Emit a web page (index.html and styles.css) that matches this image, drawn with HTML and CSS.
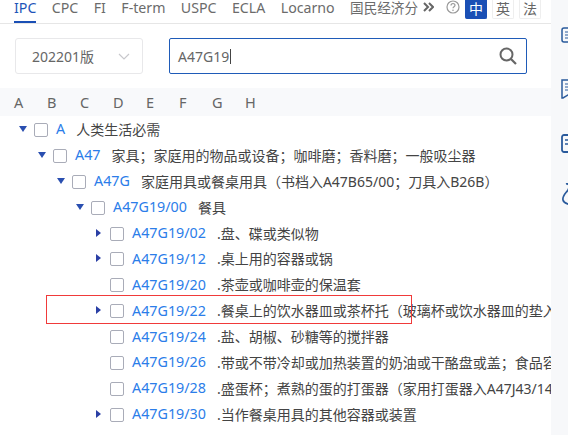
FILE: index.html
```html
<!DOCTYPE html>
<html lang="zh">
<head>
    <meta charset="UTF-8">
    <title>IPC</title>
    <link rel="stylesheet" href="styles.css">
</head>
<body>
    <div class="page">
        <div class="main">
            <!-- Tabs -->
            <div class="tabs">
                <span class="tab active">IPC</span>
                <span class="tab">CPC</span>
                <span class="tab">FI</span>
                <span class="tab">F-term</span>
                <span class="tab">USPC</span>
                <span class="tab">ECLA</span>
                <span class="tab">Locarno</span>
                <span class="tab tab-cn">国民经济分</span>
                <svg class="more-icon" width="11" height="10" viewBox="0 0 11 10"><path d="M1 1l4 4-4 4M6 1l4 4-4 4" fill="none" stroke="#666" stroke-width="2"/></svg>
                <svg class="help-icon" width="14" height="14" viewBox="0 0 14 14"><circle cx="7" cy="7" r="6" fill="none" stroke="#999" stroke-width="1.2"/><path d="M5 5.5c0-2.600 4-2.600 4-.3 0 1.500-2 1.500-2 3.100" fill="none" stroke="#999" stroke-width="1.200"/><circle cx="7" cy="10.300" r=".8" fill="#999"/></svg>
                <span class="lang lang-active">中</span>
                <span class="lang">英</span>
                <span class="lang">法</span>
            </div>

            <!-- Search -->
            <div class="search-row">
                <div class="version-select">
                    <span>202201版</span>
                    <svg width="12" height="7" viewBox="0 0 12 7"><path d="M1 1l5 5 5-5" fill="none" stroke="#c8c8cc" stroke-width="1.200"/></svg>
                </div>
                <div class="search-box">
                    <span class="search-text">A47G19</span>
                    <svg class="search-icon" width="18" height="18" viewBox="0 0 18 18"><circle cx="7.500" cy="7.500" r="6" fill="none" stroke="#666" stroke-width="2"/><path d="M12 12l5 5" stroke="#666" stroke-width="2.200"/></svg>
                </div>
            </div>

            <!-- Letters -->
            <div class="letters">
                <span>A</span><span>B</span><span>C</span><span>D</span><span>E</span><span>F</span><span>G</span><span>H</span>
            </div>

            <!-- Tree -->
            <div class="tree">
                <div class="row level-0"><span class="arrow down"></span><span class="check"></span><span class="code">A</span><span class="title">人类生活必需</span></div>
                <div class="row level-1"><span class="arrow down"></span><span class="check"></span><span class="code">A47</span><span class="title">家具；家庭用的物品或设备；咖啡磨；香料磨；一般吸尘器</span></div>
                <div class="row level-2"><span class="arrow down"></span><span class="check"></span><span class="code">A47G</span><span class="title">家庭用具或餐桌用具（书档入A47B65/00；刀具入B26B）</span></div>
                <div class="row level-3"><span class="arrow down"></span><span class="check"></span><span class="code">A47G19/00</span><span class="title">餐具</span></div>
                <div class="row level-4"><span class="arrow right"></span><span class="check"></span><span class="code">A47G19/02</span><span class="title">.盘、碟或类似物</span></div>
                <div class="row level-4"><span class="arrow right"></span><span class="check"></span><span class="code">A47G19/12</span><span class="title">.桌上用的容器或锅</span></div>
                <div class="row level-4"><span class="arrow"></span><span class="check"></span><span class="code">A47G19/20</span><span class="title">.茶壶或咖啡壶的保温套</span></div>
                <div class="row level-4"><span class="arrow right"></span><span class="check"></span><span class="code">A47G19/22</span><span class="title">.餐桌上的饮水器皿或茶杯托（玻璃杯或饮水器皿的垫入A47G23/03）</span><span class="red-box"></span></div>
                <div class="row level-4"><span class="arrow"></span><span class="check"></span><span class="code">A47G19/24</span><span class="title">.盐、胡椒、砂糖等的搅拌器</span></div>
                <div class="row level-4"><span class="arrow"></span><span class="check"></span><span class="code">A47G19/26</span><span class="title">.带或不带冷却或加热装置的奶油或干酪盘或盖；食品容器</span></div>
                <div class="row level-4"><span class="arrow"></span><span class="check"></span><span class="code">A47G19/28</span><span class="title">.盛蛋杯；煮熟的蛋的打蛋器（家用打蛋器入A47J43/14）</span></div>
                <div class="row level-4"><span class="arrow right"></span><span class="check"></span><span class="code">A47G19/30</span><span class="title">.当作餐桌用具的其他容器或装置</span></div>
            </div>
        </div>

        <!-- Side icons, cut off by the window -->
        <div class="side">
            <svg class="side-icon first" width="20" height="16" viewBox="0 0 20 16"><rect x="1" y="1" width="18" height="14" rx="2" fill="none" stroke="#2a5a9c" stroke-width="1.500"/><path d="M4 5h8M4 8h8M4 11h8" stroke="#2a5a9c" stroke-width="1.200"/></svg>
            <svg class="side-icon second" width="20" height="20" viewBox="0 0 20 20"><path d="M1 1h18v15h-12l-5 3-1 0z" fill="none" stroke="#2a5a9c" stroke-width="1.500"/><path d="M4 5h8M4 8h8M4 11h8" stroke="#2a5a9c" stroke-width="1.200"/></svg>
            <svg class="side-icon third" width="20" height="19" viewBox="0 0 20 19"><rect x="1" y="1" width="18" height="17" rx="2" fill="none" stroke="#2a5a9c" stroke-width="1.800"/><path d="M4 6h9M4 10h9" stroke="#2a5a9c" stroke-width="1.500"/></svg>
            <svg class="side-icon fourth" width="20" height="24" viewBox="0 0 20 24"><path d="M5 1c3-1 4 2 2 6-2 3-6 6-5 10 1 4 4 3 7 5M9 1c3 0 5 2 3 6-2 4-3 6 0 9" fill="none" stroke="#2a5a9c" stroke-width="1.700"/></svg>
        </div>
    </div>
</body>
</html>
```

FILE: styles.css
```css
html, body {
    margin: 0;
    height: 100%;
    overflow: hidden;
    background-color: #fff;
}

body {
    font-family: "Noto Sans", "Noto Sans CJK SC", sans-serif;
    color: #333;
}

.page {
    display: flex;
    width: 568px;
    height: 435px;
    overflow: hidden;
}

.main {
    width: 551px;
    flex-shrink: 0;
    overflow: hidden;
}

.side {
    flex: 1;
    display: flex;
    flex-direction: column;
    align-items: flex-start;
    padding-left: 10px;
    background-color: #f7f8fa;
    overflow: hidden;
}

.side-icon {
    flex-shrink: 0;
}

.side-icon.first { margin-top: 27px; }
.side-icon.second { margin-top: 36px; }
.side-icon.third { margin-top: 35px; }
.side-icon.fourth { margin-top: 30px; }

/* Tabs */
.tabs {
    display: flex;
    align-items: flex-start;
    height: 23px;
    padding-left: 14px;
    border-bottom: 1px solid #e6e6e6;
    font-size: 14.200px;
    color: #6b6b6b;
}

.tab {
    position: relative;
    margin-right: 15.400px;
    line-height: 15px;
    white-space: nowrap;
    height: 23px;
}

.tab.active {
    color: #1d55b8;
}

.tab.active::after {
    content: "";
    position: absolute;
    left: 0;
    right: 0;
    bottom: 0;
    height: 2px;
    background-color: #1a4fb5;
}

.tab-cn {
    font-size: 13.600px;
    margin-right: 5px;
}

.more-icon {
    margin: 2px 12px 0 0;
}

.help-icon {
    margin: 0 5px 0 0;
    flex-shrink: 0;
}

.lang {
    display: flex;
    align-items: center;
    justify-content: center;
    width: 20px;
    height: 18px;
    margin-right: 5px;
    border: 1px solid #eee;
    border-top: none;
    border-radius: 0 0 2px 2px;
    font-size: 14px;
    line-height: 14px;
    color: #666;
}

.lang-active {
    background-color: #1a4fb5;
    border-color: #1a4fb5;
    color: #fff;
}

/* Search */
.search-row {
    display: flex;
    padding: 14px 0 0 15px;
}

.version-select {
    display: flex;
    align-items: center;
    justify-content: space-between;
    box-sizing: border-box;
    width: 128px;
    height: 36px;
    padding: 0 12px 0 16px;
    border: 1px solid #e8e8ea;
    border-radius: 3px;
    font-size: 14px;
    color: #666;
}

.search-box {
    display: flex;
    align-items: center;
    justify-content: space-between;
    box-sizing: border-box;
    width: 358px;
    height: 36px;
    margin-left: 26px;
    padding: 0 9px 0 8px;
    border: 1px solid #1f5bb8;
    border-radius: 2px;
    font-size: 14px;
    color: #666;
}

.search-text {
    padding-right: 1px;
    border-right: 1px solid #444;
    line-height: 15px;
}

/* Letter bar */
.letters {
    display: flex;
    height: 28px;
    margin-top: 14px;
    padding-left: 14px;
    background-color: #f8f9fb;
    font-size: 14.500px;
    line-height: 28px;
    color: #666;
}

.letters span {
    width: 33px;
}

/* Tree */
.row {
    position: relative;
    display: flex;
    align-items: center;
    height: 25.900px;
    white-space: nowrap;
}

.level-0 { padding-left: 19px; }
.level-1 { padding-left: 38px; }
.level-2 { padding-left: 57px; }
.level-3 { padding-left: 76px; }
.level-4 { padding-left: 95px; }

.arrow {
    position: relative;
    width: 15px;
    height: 10px;
    flex-shrink: 0;
}

.arrow.down::before {
    content: "";
    position: absolute;
    left: 0;
    top: 2px;
    border-top: 6px solid #2a4fb0;
    border-left: 4px solid transparent;
    border-right: 4px solid transparent;
}

.arrow.right::before {
    content: "";
    position: absolute;
    left: 1px;
    top: 1px;
    border-left: 5px solid #2a3fa5;
    border-top: 4px solid transparent;
    border-bottom: 4px solid transparent;
}

.check {
    box-sizing: border-box;
    width: 14px;
    height: 14px;
    margin: 2px 8px 0 0;
    flex-shrink: 0;
    border: 1px solid #a9acb8;
    border-radius: 2px;
    background-color: #fff;
}

.code {
    margin-right: 11px;
    font-size: 14.300px;
    color: #2b7de9;
}

.title {
    font-size: 14px;
    color: #444;
}

.red-box {
    position: absolute;
    left: 46px;
    top: -2px;
    box-sizing: border-box;
    width: 366px;
    height: 29px;
    border: 1px solid #f03a3a;
}
```
